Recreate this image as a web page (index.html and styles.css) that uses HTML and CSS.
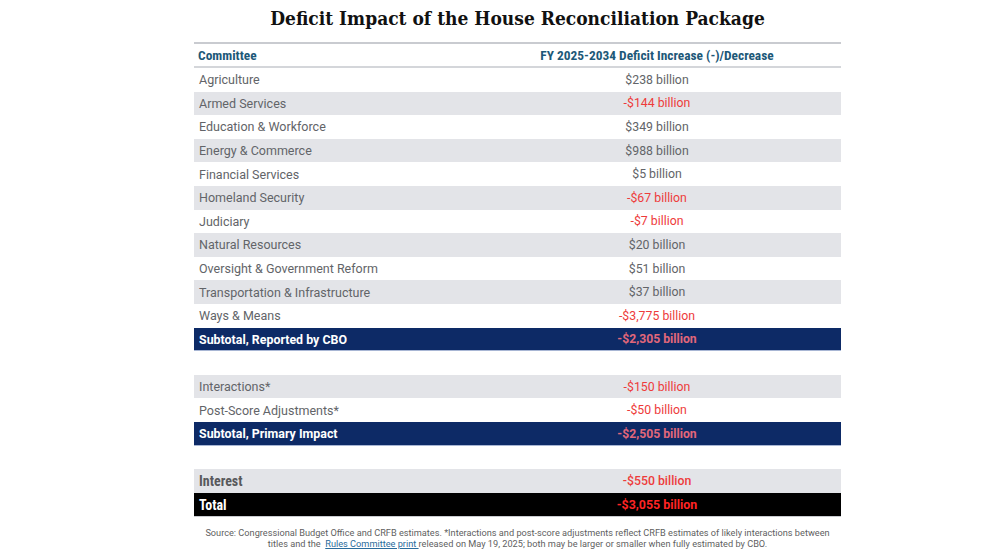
FILE: index.html
```html
<!DOCTYPE html>
<html lang="en">
<head>
<meta charset="utf-8">
<title>Deficit Impact of the House Reconciliation Package</title>
<link rel="stylesheet" href="styles.css">
</head>
<body>
<div class="page">
  <h1 class="title">Deficit Impact of the House Reconciliation Package</h1>
  <table class="tbl">
    <colgroup><col class="c1"><col class="c2"></colgroup>
    <thead>
      <tr><th class="name">Committee</th><th class="val">FY 2025-2034 Deficit Increase (-)/Decrease</th></tr>
    </thead>
    <tbody>
      <tr><td>Agriculture</td><td class="val">$238 billion</td></tr>
      <tr class="alt"><td>Armed Services</td><td class="val neg">-$144 billion</td></tr>
      <tr><td>Education &amp; Workforce</td><td class="val">$349 billion</td></tr>
      <tr class="alt"><td>Energy &amp; Commerce</td><td class="val">$988 billion</td></tr>
      <tr><td>Financial Services</td><td class="val">$5 billion</td></tr>
      <tr class="alt"><td>Homeland Security</td><td class="val neg">-$67 billion</td></tr>
      <tr><td>Judiciary</td><td class="val neg">-$7 billion</td></tr>
      <tr class="alt"><td>Natural Resources</td><td class="val">$20 billion</td></tr>
      <tr><td>Oversight &amp; Government Reform</td><td class="val">$51 billion</td></tr>
      <tr class="alt"><td>Transportation &amp; Infrastructure</td><td class="val">$37 billion</td></tr>
      <tr><td>Ways &amp; Means</td><td class="val neg">-$3,775 billion</td></tr>
      <tr class="sub"><td>Subtotal, Reported by CBO</td><td class="val neg">-$2,305 billion</td></tr>
      <tr class="blank"><td></td><td></td></tr>
      <tr class="alt"><td>Interactions*</td><td class="val neg">-$150 billion</td></tr>
      <tr><td>Post-Score Adjustments*</td><td class="val neg">-$50 billion</td></tr>
      <tr class="sub"><td>Subtotal, Primary Impact</td><td class="val neg">-$2,505 billion</td></tr>
      <tr class="blank"><td></td><td></td></tr>
      <tr class="alt interest"><td>Interest</td><td class="val neg">-$550 billion</td></tr>
      <tr class="total"><td>Total</td><td class="val neg">-$3,055 billion</td></tr>
    </tbody>
  </table>
  <p class="note">Source: Congressional Budget Office and CRFB estimates. *Interactions and post-score adjustments reflect CRFB estimates of likely interactions between<br>titles and the &nbsp;<a href="#">Rules Committee print </a>released on May 19, 2025; both may be larger or smaller when fully estimated by CBO.</p>
</div>
</body>
</html>
```

FILE: styles.css
```css
html, body {
  margin: 0;
  padding: 0;
  background: #ffffff;
}

.page {
  width: 647px;
  margin: 0 0 0 194px;
  padding-top: 7px;
}

.title {
  margin: 0 0 13px 0;
  font-family: "DejaVu Serif Condensed", "DejaVu Serif", serif;
  font-weight: bold;
  font-size: 19px;
  line-height: 22px;
  color: #111111;
  text-align: center;
}

.tbl {
  width: 647px;
  border-collapse: collapse;
  table-layout: fixed;
  font-family: "Roboto", "Liberation Sans", sans-serif;
}

.c1 { width: 279px; }

.tbl th {
  height: 22px;
  padding: 0 4px;
  font-family: "Roboto Condensed", "Roboto", sans-serif;
  font-size: 13.4px;
  font-weight: bold;
  color: #1d5878;
  border-top: 2px solid #c9cbd0;
  border-bottom: 2px solid #d4d6da;
  text-align: left;
}

.tbl th.val { text-align: center; }

.tbl td {
  height: 23.6px;
  padding: 0 0 0 5px;
  font-size: 12.5px;
  color: #626468;
}

.tbl td.val {
  text-align: center;
  padding: 0;
  font-size: 12.3px;
}

.tbl .alt td { background: #e3e4e8; }

.tbl td.neg { color: #ee3b3b; }

.tbl .sub td {
  background: #0d2a66;
  color: #ffffff;
  font-weight: bold;
  font-size: 12.4px;
  box-shadow: inset 0 -1px 0 #a8b6d4;
}

.tbl .sub td.neg { color: #e2677a; font-size: 12.2px; }

.tbl .blank td { background: #ffffff; }

.tbl .interest td:first-child {
  font-family: "Roboto Condensed", "Roboto", sans-serif;
  font-weight: bold;
  font-size: 14px;
  color: #58595c;
}

.tbl .interest td.neg { font-weight: 500; }

.tbl .total td {
  background: #000000;
  color: #ffffff;
  font-weight: bold;
  font-size: 12.4px;
  height: 24.6px;
  box-shadow: inset 0 -1px 0 #c9cbd0;
}

.tbl .total td:first-child {
  font-family: "Roboto Condensed", "Roboto", sans-serif;
  font-size: 14px;
}

.tbl .total td.neg { color: #ff2424; }

.note {
  margin: 10px 0 0 0;
  font-family: "Roboto", "Liberation Sans", sans-serif;
  font-size: 9.2px;
  line-height: 11px;
  color: #5f5f5f;
  text-align: center;
  white-space: nowrap;
}

.note a {
  color: #2a6c9c;
  text-decoration: underline;
}
```
